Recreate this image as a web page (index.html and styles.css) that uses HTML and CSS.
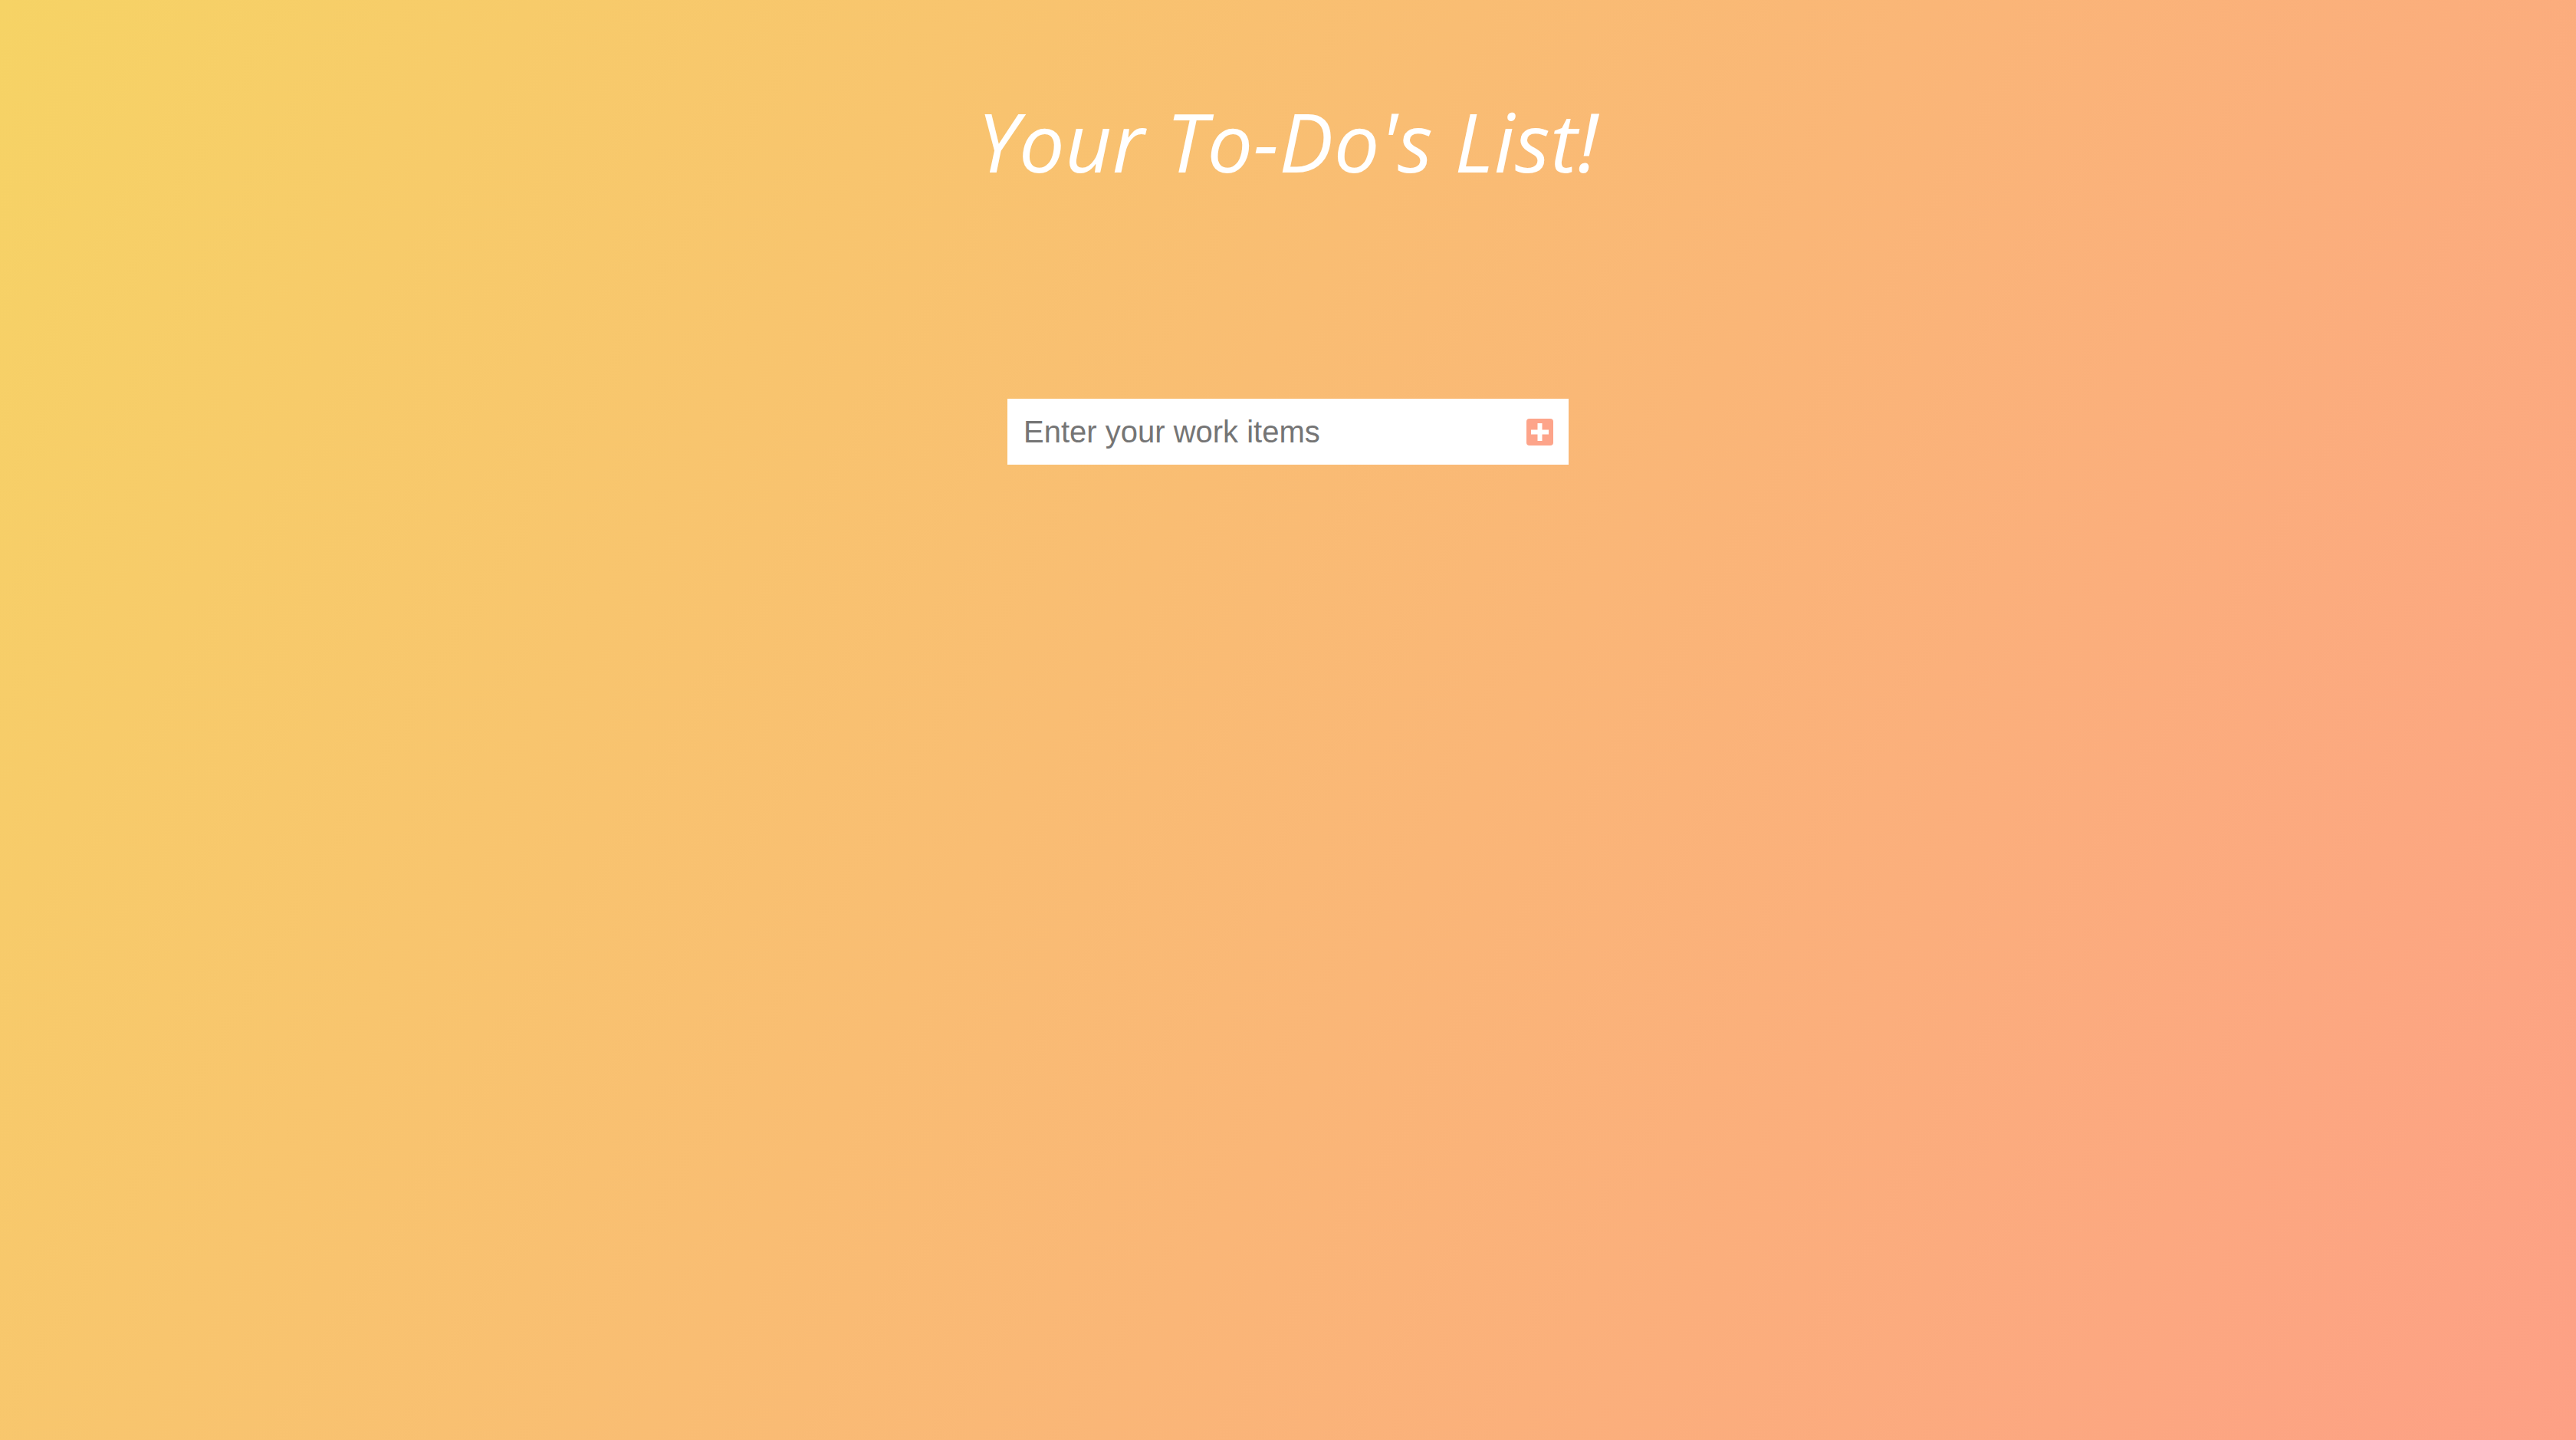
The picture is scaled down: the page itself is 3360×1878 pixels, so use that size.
FILE: index.html
```html
<!DOCTYPE html>
<html lang="en">
<head>
<meta charset="utf-8">
<title>To-Do List</title>
<link rel="stylesheet" href="styles.css">
</head>
<body>
<main class="app">
  <h1 class="title">Your To-Do's List!</h1>
  <form class="add-form">
    <input class="add-input" type="text" placeholder="Enter your work items">
    <button class="add-btn" type="button" aria-label="Add">
      <svg viewBox="0 0 35 35" width="35" height="35" aria-hidden="true">
        <rect x="0" y="0" width="35" height="35" rx="4" fill="#fda48a"/>
        <rect x="6" y="14.5" width="23" height="6" fill="#fff"/>
        <rect x="14.5" y="6" width="6" height="23" fill="#fff"/>
      </svg>
    </button>
  </form>
</main>
</body>
</html>
```
FILE: styles.css
```css
html, body {
  margin: 0;
  padding: 0;
  height: 100%;
}
body {
  background: linear-gradient(120deg, #f6d365 0%, #fda085 100%);
  font-family: "Liberation Sans", Arial, sans-serif;
}
.app {
  display: flex;
  flex-direction: column;
  align-items: center;
  padding-top: 131px;
}
.title {
  margin: 0;
  font-family: "Open Sans", "Liberation Sans", sans-serif;
  font-style: italic;
  font-weight: 500;
  font-size: 106px;
  letter-spacing: 0.5px;
  line-height: 1;
  color: #ffffff;
}
.add-form {
  margin-top: 283px;
  width: 732px;
  height: 86px;
  background: #ffffff;
  display: flex;
  align-items: center;
  box-sizing: border-box;
  padding: 0 20px 0 21px;
}
.add-input {
  flex: 1;
  border: none;
  outline: none;
  background: transparent;
  font-family: "Liberation Sans", Arial, sans-serif;
  font-size: 40px;
  color: #444;
  padding: 0;
  height: 100%;
}
.add-input::placeholder {
  color: #757575;
}
.add-btn {
  border: none;
  background: none;
  padding: 0;
  margin: 0;
  display: flex;
  cursor: pointer;
}
```
